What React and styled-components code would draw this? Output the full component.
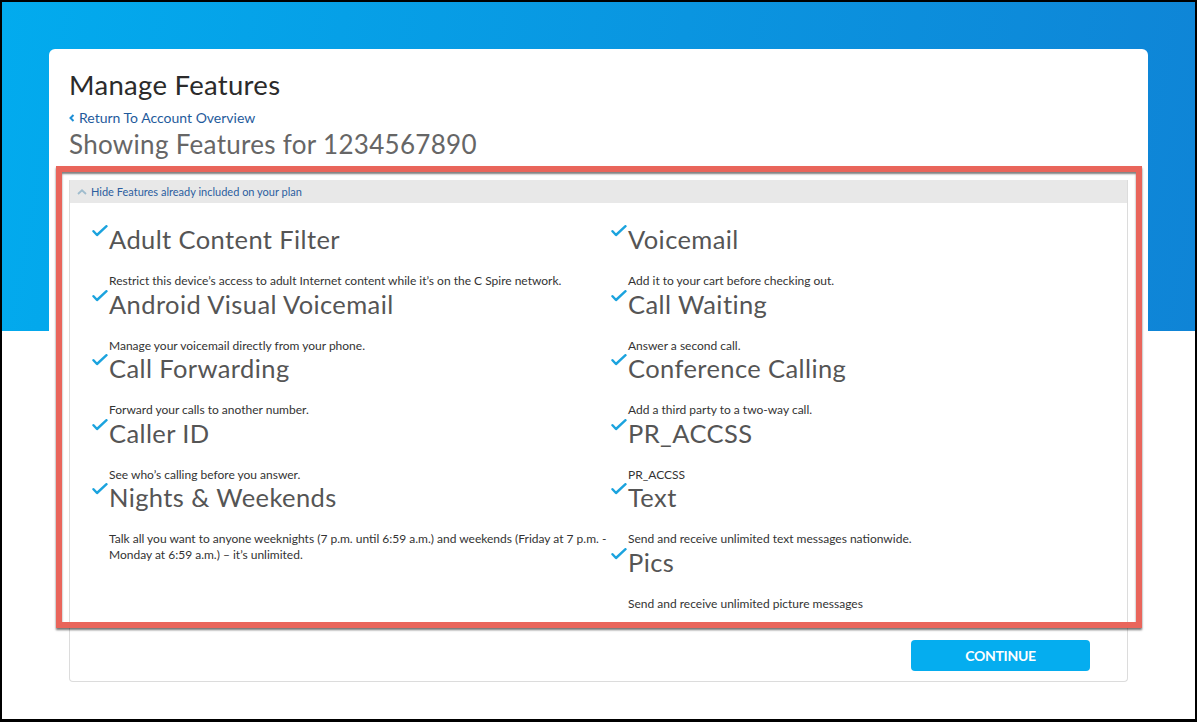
import React from "react";
import styled, { createGlobalStyle } from "styled-components";

const GlobalStyle = createGlobalStyle`
  html, body {
    margin: 0;
    padding: 0;
    background: #000;
  }
  body {
    font-family: Lato, "Open Sans", sans-serif;
  }
`;

const leftFeatures = [
  {
    title: "Adult Content Filter",
    desc: "Restrict this device’s access to adult Internet content while it’s on the C Spire network.",
  },
  { title: "Android Visual Voicemail", desc: "Manage your voicemail directly from your phone." },
  { title: "Call Forwarding", desc: "Forward your calls to another number." },
  { title: "Caller ID", desc: "See who’s calling before you answer." },
  {
    title: "Nights & Weekends",
    desc: "Talk all you want to anyone weeknights (7 p.m. until 6:59 a.m.) and weekends (Friday at 7 p.m. - Monday at 6:59 a.m.) – it’s unlimited.",
  },
];

const rightFeatures = [
  { title: "Voicemail", desc: "Add it to your cart before checking out." },
  { title: "Call Waiting", desc: "Answer a second call." },
  { title: "Conference Calling", desc: "Add a third party to a two-way call." },
  { title: "PR_ACCSS", desc: "PR_ACCSS" },
  { title: "Text", desc: "Send and receive unlimited text messages nationwide." },
  { title: "Pics", desc: "Send and receive unlimited picture messages" },
];

function Check() {
  return (
    <CheckIcon viewBox="0 0 16 12" width="16" height="12">
      <path d="M1.5 6.2 L5 10 L14.5 1.2" fill="none" stroke="#1ba3de" strokeWidth="2.4" strokeLinecap="round" strokeLinejoin="round" />
    </CheckIcon>
  );
}

function Feature({ title, desc }) {
  return (
    <Item>
      <Check />
      <TitleText>{title}</TitleText>
      <Desc>{desc}</Desc>
    </Item>
  );
}

export default function App() {
  return (
    <Frame>
      <GlobalStyle />
      <Card>
        <PageTitle>Manage Features</PageTitle>
        <BackLink href="#">
          <svg viewBox="0 0 6 8" width="6" height="8">
            <path d="M4.5 1 L1.5 4 L4.5 7" fill="none" stroke="#1d8fd6" strokeWidth="2" />
          </svg>
          Return To Account Overview
        </BackLink>
        <SubTitle>Showing Features for 1234567890</SubTitle>

        <Panel>
          <PanelBar>
            <svg viewBox="0 0 10 6" width="10" height="6">
              <path d="M1 5 L5 1.3 L9 5" fill="none" stroke="#9fbccd" strokeWidth="1.8" />
            </svg>
            Hide Features already included on your plan
          </PanelBar>
          <Columns>
            <Column>
              {leftFeatures.map((f) => (
                <Feature key={f.title} {...f} />
              ))}
            </Column>
            <Column>
              {rightFeatures.map((f) => (
                <Feature key={f.title} {...f} />
              ))}
            </Column>
          </Columns>
          <Footer>
            <ContinueButton>CONTINUE</ContinueButton>
          </Footer>
        </Panel>

        <Highlight />
      </Card>
    </Frame>
  );
}

const Frame = styled.div`
  box-sizing: border-box;
  width: 1197px;
  height: 722px;
  overflow: hidden;
  border: solid #000;
  border-width: 2px 2px 3px 2px;
  background-color: #fff;
  background-image: linear-gradient(100deg, #02abee 0%, #0a95e0 55%, #0f84d6 100%);
  background-size: 100% 329px;
  background-repeat: no-repeat;
  padding: 47px 47px 0 47px;
`;

const Card = styled.div`
  position: relative;
  background: #fff;
  border-radius: 6px 6px 0 0;
  padding: 20px 20px 0 20px;
  height: 700px;
`;

const PageTitle = styled.h1`
  margin: 0;
  font-size: 27.5px;
  letter-spacing: 0.3px;
  line-height: 32px;
  font-weight: 400;
  color: #2b2b2b;
`;

const BackLink = styled.a`
  display: flex;
  align-items: center;
  gap: 4px;
  margin-top: 8px;
  font-size: 14px;
  line-height: 18px;
  color: #1f5b9c;
  text-decoration: none;
`;

const SubTitle = styled.h2`
  margin: 1px 0 0 0;
  font-size: 26px;
  letter-spacing: 0.3px;
  line-height: 32px;
  font-weight: 400;
  color: #666;
`;

const Panel = styled.div`
  margin-top: 20px;
  border: 1px solid #dcdcdc;
  border-top: none;
  border-radius: 0 0 4px 4px;
`;

const PanelBar = styled.div`
  display: flex;
  align-items: center;
  gap: 4px;
  height: 23px;
  padding-left: 7px;
  background: #e8e8e8;
  font-size: 11px;
  color: #2c5e9f;
`;

const Columns = styled.div`
  display: grid;
  grid-template-columns: 519px 1fr;
  padding: 21px 0 0 22px;
`;

const Column = styled.div`
  display: flex;
  flex-direction: column;
`;

const Item = styled.div`
  position: relative;
  padding-left: 17px;
  height: 64.5px;
  &:last-child {
    height: auto;
  }
`;

const CheckIcon = styled.svg`
  position: absolute;
  left: 0;
  top: 1px;
`;

const TitleText = styled.div`
  font-size: 25.5px;
  letter-spacing: 0.4px;
  line-height: 30px;
  color: #555;
`;

const Desc = styled.div`
  margin-top: 19px;
  max-width: 502px;
  font-size: 12px;
  line-height: 16px;
  color: #333;
`;

const Footer = styled.div`
  display: flex;
  justify-content: flex-end;
  padding: 28px 37px 10px 0;
`;

const ContinueButton = styled.button`
  width: 179px;
  height: 31px;
  border: none;
  border-radius: 4px;
  background: #05adef;
  color: #fff;
  font-family: Lato, "Open Sans", sans-serif;
  font-weight: 700;
  font-size: 14px;
  letter-spacing: -0.3px;
  cursor: pointer;
`;

const Highlight = styled.div`
  position: absolute;
  left: 7px;
  top: 117px;
  width: 1086px;
  height: 462px;
  box-sizing: border-box;
  border: 6px solid #e9655b;
  box-shadow: 0 2px 2px rgba(0, 0, 0, 0.55), inset 0 2px 2px rgba(0, 0, 0, 0.5);
  pointer-events: none;
`;
